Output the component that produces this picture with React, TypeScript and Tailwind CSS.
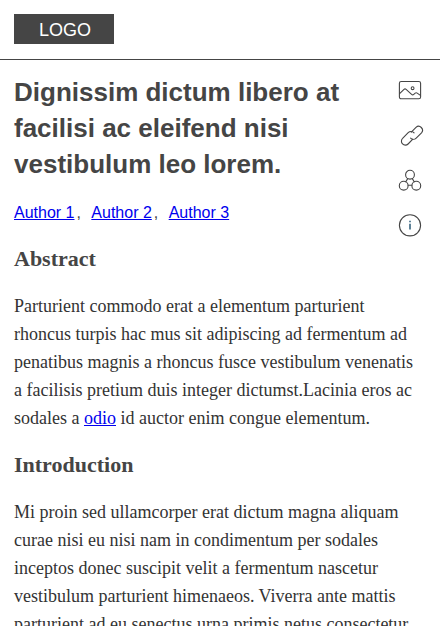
import type { ReactNode } from 'react';

function Icon({ children }: { children: ReactNode }) {
  return (
    <svg
      className="block h-7 w-7 shrink-0"
      viewBox="0 0 28 28"
      fill="none"
      stroke="#454545"
      strokeWidth="1.1"
      strokeLinecap="round"
      strokeLinejoin="round"
    >
      {children}
    </svg>
  );
}

const headingClass = "mt-[19px] mb-[19px] font-['Liberation_Serif',serif] text-[22px] leading-7 font-bold text-[#454545]";
const bodyClass = "font-['Liberation_Serif',serif] text-[18px] leading-7 whitespace-nowrap text-[#333]";
const linkClass = 'text-[#0000ee] underline';

export default function App() {
  return (
    <div className="h-[626px] w-[440px] overflow-hidden bg-white font-['Liberation_Sans',sans-serif] text-[#454545]">
      <header className="flex h-[60px] items-start border-b border-[#454545] px-[14px] pt-[14px]">
        <div className="flex h-[30px] w-[100px] items-center justify-center bg-[#454545] pt-[2px] pl-[2px] text-[18px] leading-none text-white">
          LOGO
        </div>
      </header>

      <section className="flex h-[166px] justify-between pr-4 pl-[14px]">
        <div className="w-[340px] pt-[14px]">
          <h1 className="text-[26px] leading-9 font-bold">
            Dignissim dictum libero at facilisi ac eleifend nisi vestibulum leo lorem.
          </h1>
          <div className="mt-[19px] text-[16px] leading-6 whitespace-nowrap">
            <a className={linkClass} href="#a1">Author 1</a>
            <span className="mr-[10.4px] ml-[2px]">,</span>
            <a className={linkClass} href="#a2">Author 2</a>
            <span className="mr-[10.4px] ml-[2px]">,</span>
            <a className={linkClass} href="#a3">Author 3</a>
          </div>
        </div>
        <nav className="flex flex-col gap-[17px] pt-4">
          <Icon>
            <rect x="3.4" y="5.5" width="21.2" height="17.3" rx="1.8" />
            <path d="M3.6 17.7 8 13.4Q9 12.4 10.1 13.4L15.6 18.4Q16.7 19.3 17.8 18.3L19.2 17.1Q20.2 16.4 21.2 17.1L24.4 19.4" />
            <circle cx="16.6" cy="12.2" r="1.4" />
          </Icon>
          <Icon>
            <path d="M15.3 11.1 20 6.3A3.9 3.9 0 0 1 25.5 11.8L20.2 17.1A4 4 0 0 1 14.6 17.1" />
            <path d="M18.1 11.9A4 4 0 0 0 12.2 11.6L6.6 17.4A3.9 3.9 0 0 0 12.1 23L16.8 18.2" />
          </Icon>
          <Icon>
            <circle cx="14" cy="8.7" r="4.4" />
            <circle cx="7.7" cy="19.7" r="4.4" />
            <circle cx="20.3" cy="19.7" r="4.4" />
            <path d="M11.7 12.6 9.8 15.8M16.3 12.6 18.2 15.8M12.2 19.2H15.8" />
          </Icon>
          <Icon>
            <circle cx="14" cy="14.3" r="10.6" />
            <path d="M14 12.7V18.4" stroke="#35627d" strokeWidth="1.6" strokeLinecap="butt" />
            <path d="M14 9.8V11.3" stroke="#35627d" strokeWidth="1.6" strokeLinecap="butt" />
          </Icon>
        </nav>
      </section>

      <main className="px-[14px]">
        <h2 className={headingClass}>Abstract</h2>
        <p className={bodyClass}>
          Parturient commodo erat a elementum parturient<br />
          rhoncus turpis hac mus sit adipiscing ad fermentum ad<br />
          penatibus magnis a rhoncus fusce vestibulum venenatis<br />
          a facilisis pretium duis integer dictumst.Lacinia eros ac<br />
          sodales a <a className={linkClass} href="#odio">odio</a> id auctor enim congue elementum.
        </p>
        <h2 className={headingClass}>Introduction</h2>
        <p className={bodyClass}>
          Mi proin sed ullamcorper erat dictum magna aliquam<br />
          curae nisi eu nisi nam in condimentum per sodales<br />
          inceptos donec suscipit velit a fermentum nascetur<br />
          vestibulum parturient himenaeos. Viverra ante mattis<br />
          parturient ad eu senectus urna primis netus consectetur
        </p>
      </main>
    </div>
  );
}
